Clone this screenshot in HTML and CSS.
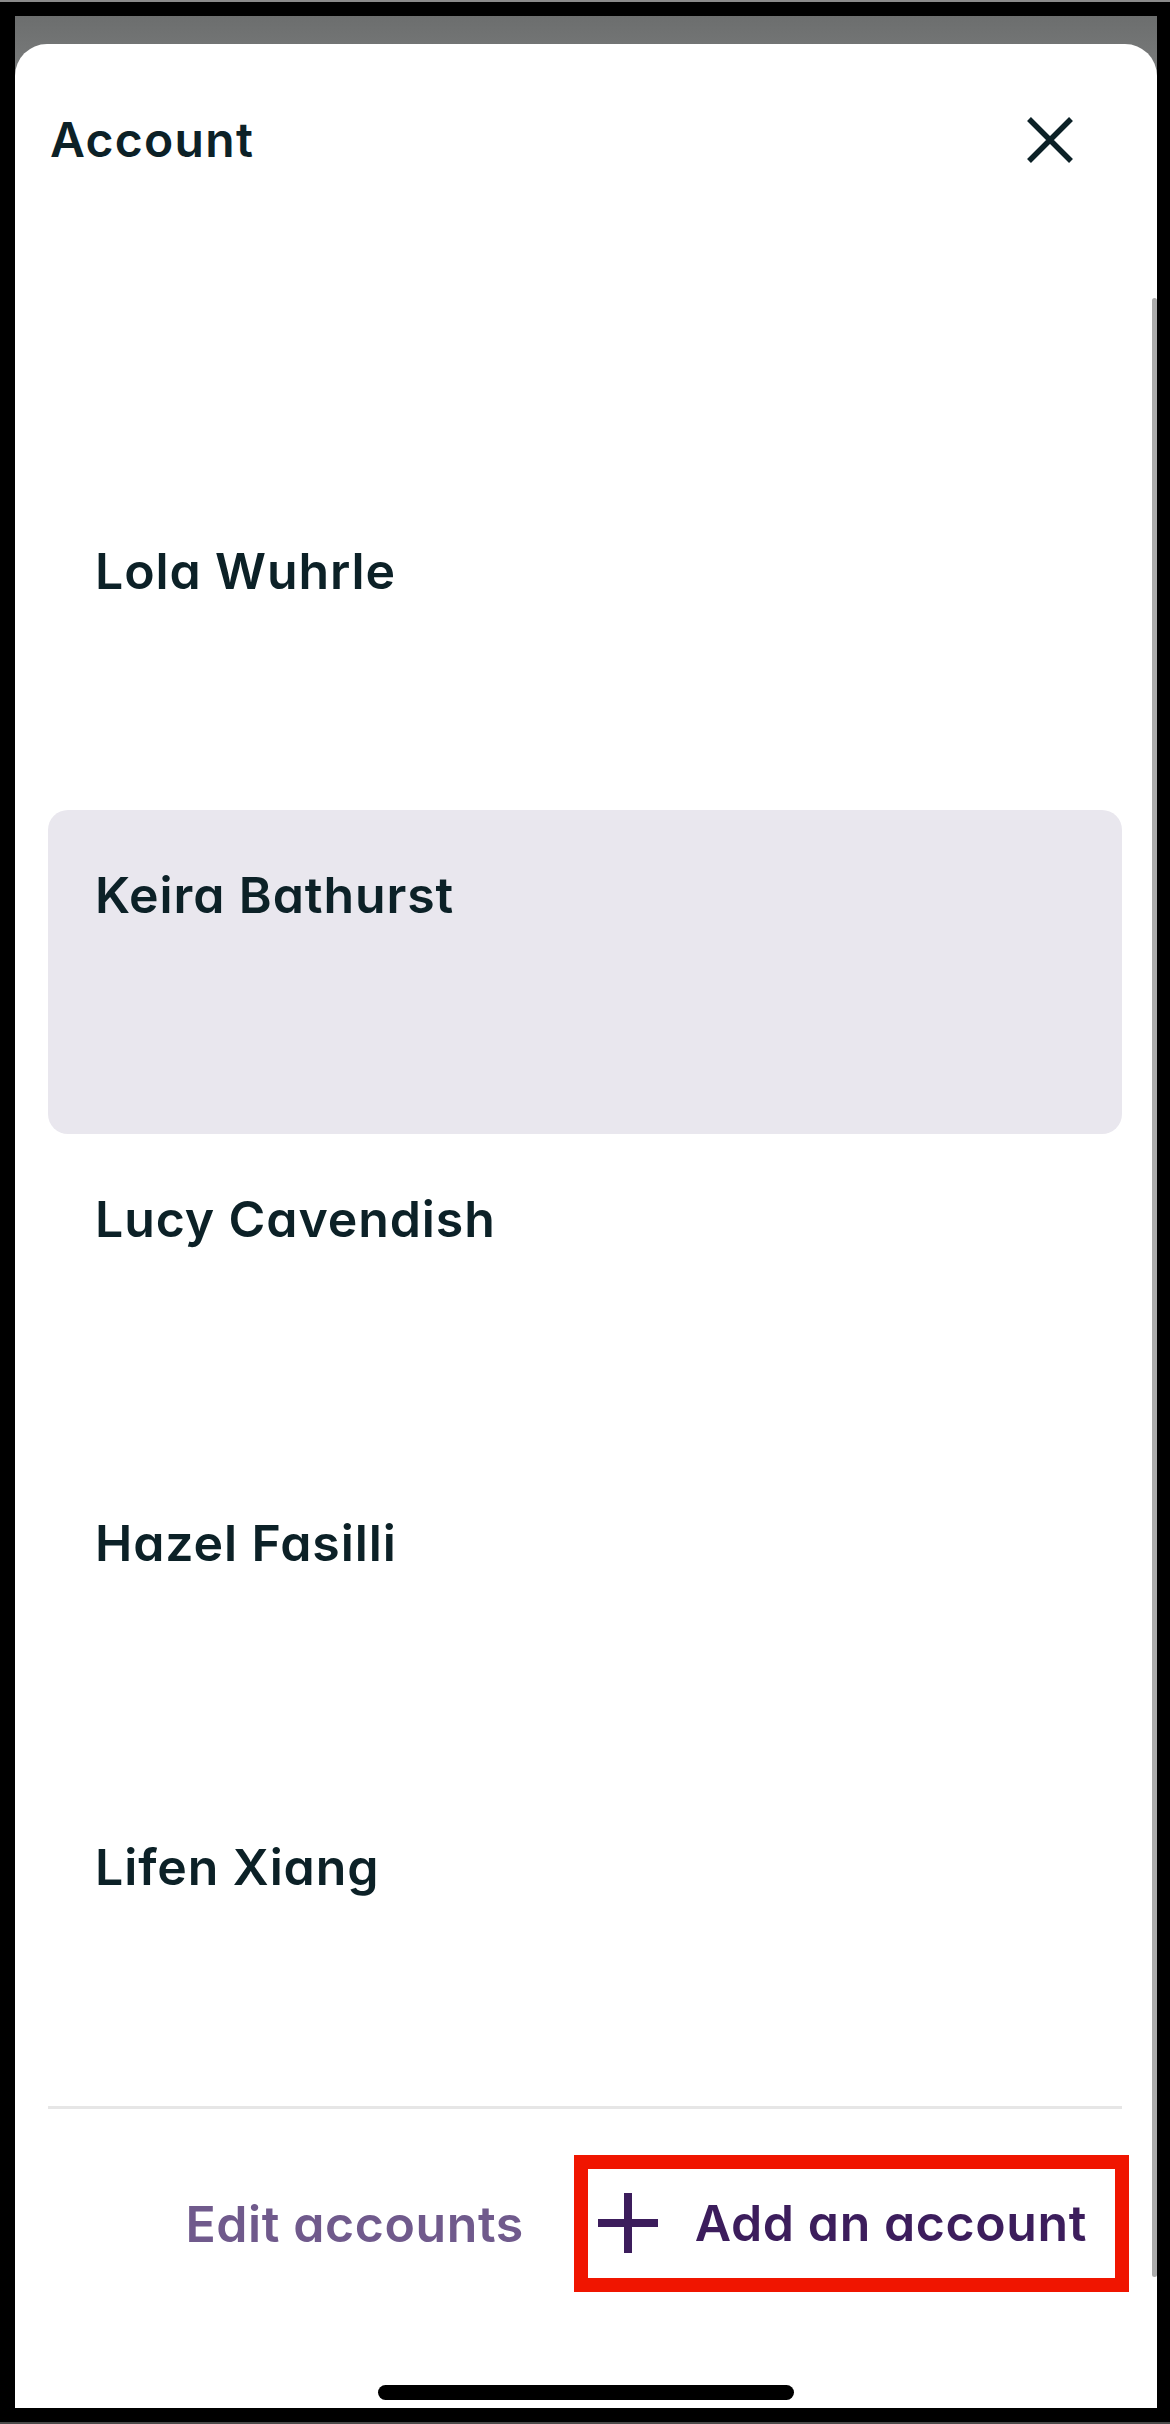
FILE: index.html
```html
<!DOCTYPE html>
<html>
    <head>
        <meta charset="utf-8">
        <link rel="stylesheet" href="styles.css">
    </head>
    <body>
        <div class="screen">
            <div class="stage">
                <section class="sheet">
                    <header class="sheet-header">
                        <h1 class="title">Account</h1>
                        <button class="close" aria-label="Close">
                            <svg width="48" height="48" viewBox="0 0 48 48">
                                <path d="M3 3 L45 45 M45 3 L3 45" stroke="#0c2127" stroke-width="5.5" fill="none"/>
                            </svg>
                        </button>
                    </header>
                    <ul class="accounts">
                        <li class="account">Lola Wuhrle</li>
                        <li class="account selected">Keira Bathurst</li>
                        <li class="account">Lucy Cavendish</li>
                        <li class="account">Hazel Fasilli</li>
                        <li class="account">Lifen Xiang</li>
                    </ul>
                    <div class="actions">
                        <a class="edit" href="#">Edit accounts</a>
                        <div class="highlight">
                            <a class="add" href="#">
                                <svg width="60" height="60" viewBox="0 0 60 60">
                                    <path d="M30 0 V60 M0 30 H60" stroke="#3c1d5c" stroke-width="8" fill="none"/>
                                </svg>
                                Add an account
                            </a>
                        </div>
                    </div>
                    <div class="home-indicator"></div>
                    <div class="scrollbar"></div>
                </section>
            </div>
        </div>
    </body>
</html>
```

FILE: styles.css
```css
body {
    margin: 0;
    background-color: #000;
    font-family: "Inter", "Noto Sans", sans-serif;
    font-feature-settings: "cv11" 1;
    color: #0c2127;
}
.screen {
    height: 2424px;
    box-sizing: border-box;
    border-top: 2px solid #8a8a8a;
    border-bottom: 2px solid #4a4a4a;
    padding: 14px 13px 14px 15px;
}
.stage {
    background: linear-gradient(#6c6e6e, #7a7c7c 60px, #7a7c7c);
    padding-top: 28px;
}
.sheet {
    position: relative;
    height: 2364px;
    background-color: #fff;
    border-radius: 32px 32px 0 0;
    display: flex;
    flex-direction: column;
}
.sheet-header {
    display: flex;
    justify-content: space-between;
    align-items: center;
    padding: 66px 83px 0 35px;
}
.title {
    margin: 0;
    font-size: 48px;
    line-height: 60px;
    font-weight: 600;
    letter-spacing: 1.3px;
}
.close {
    border: none;
    background: none;
    padding: 0;
    width: 48px;
    height: 48px;
    display: flex;
}
.accounts {
    list-style: none;
    margin: 316px 35px 0 33px;
    padding: 0;
}
.account {
    height: 324px;
    box-sizing: border-box;
    padding: 55px 0 0 47px;
    font-size: 50px;
    line-height: 60px;
    font-weight: 600;
    letter-spacing: 0.9px;
    border-radius: 20px;
}
.selected {
    background-color: #e9e7ee;
}
.actions {
    margin: 0 35px 0 33px;
    border-top: 3px solid #e6e6e6;
    padding-top: 46px;
    display: flex;
    justify-content: flex-end;
    align-items: center;
    gap: 50px;
}
.edit, .add {
    font-size: 50px;
    line-height: 60px;
    font-weight: 600;
    letter-spacing: 0.6px;
    text-decoration: none;
}
.edit {
    color: #705a8c;
}
.highlight {
    border: 14px solid #f01500;
    margin-right: -7px;
    padding: 24px 28px 25px 10px;
}
.add {
    color: #3c1d5c;
    display: flex;
    align-items: center;
    gap: 37px;
}
.add svg {
    flex: none;
}
.home-indicator {
    margin-top: auto;
    margin-bottom: 8px;
    align-self: center;
    width: 416px;
    height: 15px;
    border-radius: 8px;
    background-color: #000;
}
.scrollbar {
    position: absolute;
    right: 0;
    top: 254px;
    width: 5px;
    height: 1979px;
    border-radius: 3px;
    background-color: #ababab;
}
```
